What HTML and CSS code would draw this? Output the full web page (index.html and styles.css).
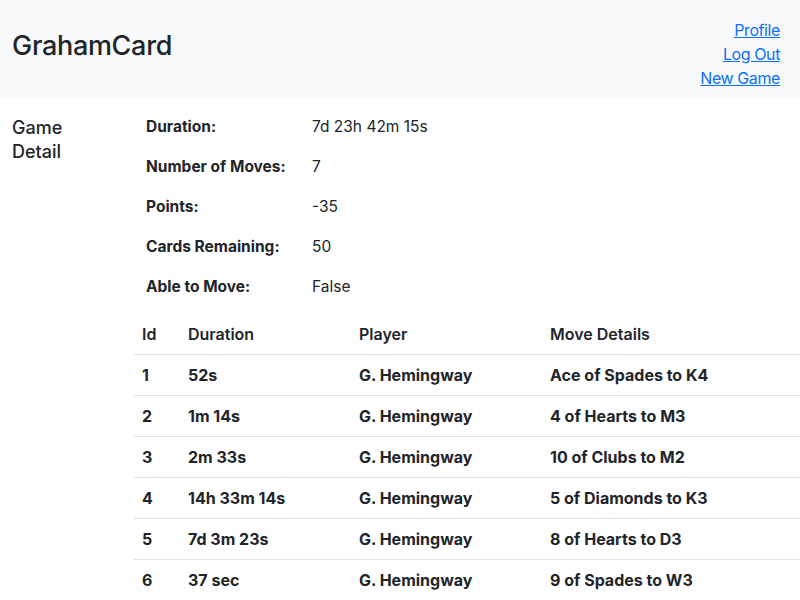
FILE: index.html
```html
<!DOCTYPE html>
<html>
<head>
<meta charset="utf-8">
<link rel="stylesheet" href="styles.css">
</head>
<body>
<header class="topbar">
  <div class="brand">GrahamCard</div>
  <nav class="links">
    <a href="#">Profile</a>
    <a href="#">Log Out</a>
    <a href="#">New Game</a>
  </nav>
</header>
<main class="page">
  <aside class="side">Game Detail</aside>
  <section class="content">
    <dl class="details">
      <dt>Duration:</dt><dd>7d 23h 42m 15s</dd>
      <dt>Number of Moves:</dt><dd>7</dd>
      <dt>Points:</dt><dd>-35</dd>
      <dt>Cards Remaining:</dt><dd>50</dd>
      <dt>Able to Move:</dt><dd>False</dd>
    </dl>
    <table class="moves">
      <thead>
        <tr><th class="c-id">Id</th><th class="c-dur">Duration</th><th class="c-player">Player</th><th>Move Details</th></tr>
      </thead>
      <tbody>
        <tr><td>1</td><td>52s</td><td>G. Hemingway</td><td>Ace of Spades to K4</td></tr>
        <tr><td>2</td><td>1m 14s</td><td>G. Hemingway</td><td>4 of Hearts to M3</td></tr>
        <tr><td>3</td><td>2m 33s</td><td>G. Hemingway</td><td>10 of Clubs to M2</td></tr>
        <tr><td>4</td><td>14h 33m 14s</td><td>G. Hemingway</td><td>5 of Diamonds to K3</td></tr>
        <tr><td>5</td><td>7d 3m 23s</td><td>G. Hemingway</td><td>8 of Hearts to D3</td></tr>
        <tr><td>6</td><td>37 sec</td><td>G. Hemingway</td><td>9 of Spades to W3</td></tr>
      </tbody>
    </table>
  </section>
</main>
</body>
</html>
```

FILE: styles.css
```css
* { box-sizing: border-box; }
body {
  margin: 0;
  font-family: Inter, "Liberation Sans", sans-serif;
  font-size: 16px;
  line-height: 24px;
  color: #212529;
  background: #fff;
}
.topbar {
  display: flex;
  justify-content: space-between;
  align-items: flex-start;
  background: #f8f9fa;
  padding: 18px 20px 8px 12px;
  height: 98px;
}
.brand {
  font-size: 27px;
  line-height: 32px;
  font-weight: 500;
  letter-spacing: -0.3px;
  margin-top: 12px;
}
.links {
  display: flex;
  flex-direction: column;
  align-items: flex-end;
}
.links a {
  color: #0d6efd;
  text-decoration: underline;
  line-height: 24px;
  letter-spacing: -0.4px;
}
.page {
  display: flex;
}
.side {
  width: 134px;
  flex: none;
  padding: 18px 36px 0 12px;
  font-size: 18px;
  line-height: 24px;
  font-weight: 500;
}
.content {
  flex: 1;
  padding-top: 17px;
}
.details {
  display: grid;
  grid-template-columns: 166px 1fr;
  row-gap: 16px;
  margin: 0 0 15px 0;
  padding-left: 12px;
}
.details dt {
  font-weight: 700;
  font-size: 15.5px;
}
.details dd {
  margin: 0;
  font-size: 15.5px;
}
.moves {
  width: 100%;
  border-collapse: collapse;
}
.moves th, .moves td {
  text-align: left;
  padding: 8px;
  font-weight: 700;
  line-height: 24px;
}
.moves th { font-weight: 600; }
.moves tr { border-bottom: 1px solid #dee2e6; }
.c-id { width: 46px; }
.c-dur { width: 171px; }
.c-player { width: 191px; }
```
